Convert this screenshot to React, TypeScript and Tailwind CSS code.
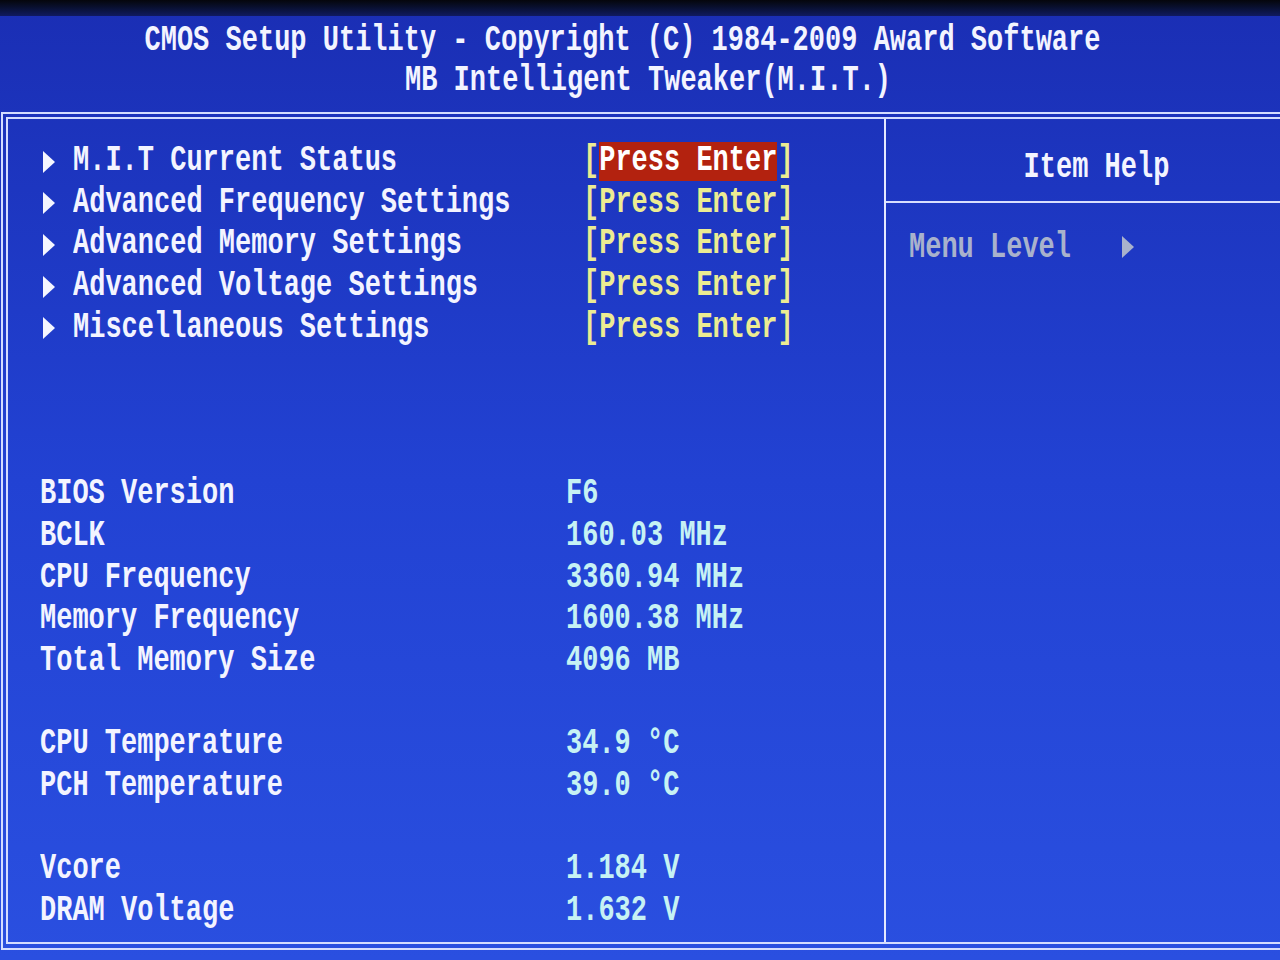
import React from 'react';

// Tall BIOS glyphs: monospace stretched vertically
const T: React.FC<{ children: React.ReactNode; className?: string }> = ({ children, className = '' }) => (
  <span className={`inline-block scale-y-[1.4] whitespace-pre ${className}`}>{children}</span>
);

const Arrow: React.FC<{ color: string }> = ({ color }) => (
  <svg width="14" height="24" viewBox="0 0 14 24" className="block">
    <path d="M1 1 L13 12 L1 23 Z" fill={color} />
  </svg>
);

const menu = [
  'M.I.T Current Status',
  'Advanced Frequency Settings',
  'Advanced Memory Settings',
  'Advanced Voltage Settings',
  'Miscellaneous Settings',
];

type Row = { label: string; value: string } | null;

const info: Row[] = [
  null,
  null,
  null,
  { label: 'BIOS Version', value: 'F6' },
  { label: 'BCLK', value: '160.03 MHz' },
  { label: 'CPU Frequency', value: '3360.94 MHz' },
  { label: 'Memory Frequency', value: '1600.38 MHz' },
  { label: 'Total Memory Size', value: '4096 MB' },
  null,
  { label: 'CPU Temperature', value: '34.9 °C' },
  { label: 'PCH Temperature', value: '39.0 °C' },
  null,
  { label: 'Vcore', value: '1.184 V' },
  { label: 'DRAM Voltage', value: '1.632 V' },
];

export default function App() {
  return (
    <div
      className="w-[1280px] h-[960px] overflow-hidden bg-linear-to-b from-[#1a2eb4] via-[#2242d3] to-[#2a4fe0] text-[27px] font-bold text-[#f3f4ff]"
      style={{ fontFamily: '"Liberation Mono", "DejaVu Sans Mono", monospace' }}
    >
      <div className="h-[16px] bg-linear-to-b from-[#05060c] to-[#101a60]" />

      <div className="flex flex-col items-center pt-[4px] h-[96px]">
        <div className="h-[40px] leading-[40px] pr-[35px]">
          <T>CMOS Setup Utility - Copyright (C) 1984-2009 Award Software</T>
        </div>
        <div className="h-[40px] leading-[40px] pl-[16px]">
          <T>MB Intelligent Tweaker(M.I.T.)</T>
        </div>
      </div>

      <div className="ml-[1px] h-[838px] border-t-2 border-l-2 border-b-2 border-[#d4dcff] pt-[3px] pl-[3px] pb-[4px]">
        <div className="flex h-full border-t-2 border-l-2 border-b-2 border-[#d4dcff]">
          <div className="w-[878px] border-r-2 border-[#e4e8ff] pl-[32px] pt-[22px] leading-[41.67px]">
            {menu.map((m, i) => (
              <div key={m} className="flex h-[41.67px] items-center">
                <div className="w-[33px] pl-[2px]">
                  <Arrow color="#f5f6ff" />
                </div>
                <div className="w-[510px]">
                  <T>{m}</T>
                </div>
                <div className="flex items-center text-[#ecec92]">
                  <T>[</T>
                  {i === 0 ? (
                    <span className="flex h-[39px] items-center bg-[#b3220f] text-[#ffffff]">
                      <T>Press Enter</T>
                    </span>
                  ) : (
                    <T>Press Enter</T>
                  )}
                  <T>]</T>
                </div>
              </div>
            ))}
            {info.map((r, i) => (
              <div key={i} className="flex h-[41.67px] items-center">
                {r && (
                  <>
                    <div className="w-[526px]">
                      <T>{r.label}</T>
                    </div>
                    <div className="text-[#c6f2f4]">
                      <T>{r.value}</T>
                    </div>
                  </>
                )}
              </div>
            ))}
          </div>

          <div className="flex-1 flex flex-col">
            <div className="flex h-[84px] items-center justify-center border-b-2 border-[#d8defe] pt-[14px] pl-[27px]">
              <T>Item Help</T>
            </div>
            <div className="flex h-[40px] items-center mt-[24px] pl-[23px] text-[#a9b2cc]">
              <T>Menu Level</T>
              <div className="ml-[50px]">
                <Arrow color="#a9b2cc" />
              </div>
            </div>
          </div>
        </div>
      </div>
    </div>
  );
}
